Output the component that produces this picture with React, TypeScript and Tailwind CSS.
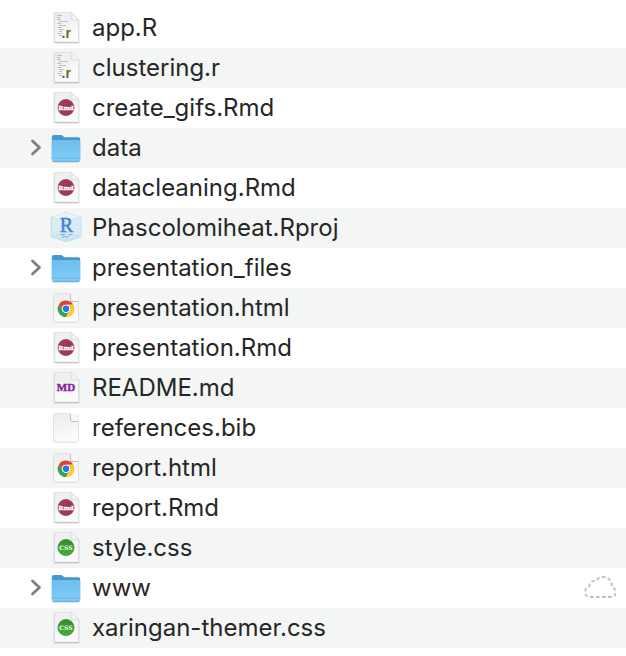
import React from "react";

type Kind = "r" | "rmd" | "folder" | "rproj" | "html" | "md" | "plain" | "css";

type Entry = { name: string; kind: Kind; inCloud?: boolean };

const entries: Entry[] = [
  { name: "app.R", kind: "r" },
  { name: "clustering.r", kind: "r" },
  { name: "create_gifs.Rmd", kind: "rmd" },
  { name: "data", kind: "folder" },
  { name: "datacleaning.Rmd", kind: "rmd" },
  { name: "Phascolomiheat.Rproj", kind: "rproj" },
  { name: "presentation_files", kind: "folder" },
  { name: "presentation.html", kind: "html" },
  { name: "presentation.Rmd", kind: "rmd" },
  { name: "README.md", kind: "md" },
  { name: "references.bib", kind: "plain" },
  { name: "report.html", kind: "html" },
  { name: "report.Rmd", kind: "rmd" },
  { name: "style.css", kind: "css" },
  { name: "www", kind: "folder", inCloud: true },
  { name: "xaringan-themer.css", kind: "css" },
];

function Gradients() {
  return (
    <svg className="absolute size-0" aria-hidden="true">
      <defs>
        <linearGradient id="paper" x1="0" y1="0" x2="0.3" y2="1">
          <stop offset="0" stopColor="#ececec" />
          <stop offset="0.5" stopColor="#f3f3f3" />
          <stop offset="1" stopColor="#fcfcfc" />
        </linearGradient>
        <linearGradient id="fold" x1="0" y1="1" x2="1" y2="0">
          <stop offset="0" stopColor="#e2e2e2" />
          <stop offset="0.5" stopColor="#ffffff" />
        </linearGradient>
        <linearGradient id="folderFront" x1="0" y1="0" x2="0" y2="1">
          <stop offset="0" stopColor="#6dbdef" />
          <stop offset="1" stopColor="#83cdf8" />
        </linearGradient>
        <linearGradient id="cubeFill" x1="0" y1="0" x2="0" y2="1">
          <stop offset="0" stopColor="#e6f2f7" />
          <stop offset="1" stopColor="#cde6f2" />
        </linearGradient>
        <linearGradient id="cubeLetter" x1="0" y1="0" x2="0" y2="1">
          <stop offset="0" stopColor="#3568ad" />
          <stop offset="1" stopColor="#4b9ce0" />
        </linearGradient>
        <linearGradient id="greenBadge" x1="0" y1="0" x2="0" y2="1">
          <stop offset="0" stopColor="#2f8f25" />
          <stop offset="1" stopColor="#43b52f" />
        </linearGradient>
      </defs>
    </svg>
  );
}

function Sheet() {
  return (
    <>
      <path d="M6.5 5.5H23.5L30.5 12.5V34.7H6.5Z" fill="none" stroke="#000" strokeOpacity="0.14" strokeWidth="1.8" strokeLinejoin="round" />
      <path d="M6.5 4.5H23.5L30.5 11.5V34.3H6.5Z" fill="url(#paper)" stroke="#dadada" strokeWidth="0.6" />
      <path d="M23.2 4.5L30.5 11.8H24.2Q23.2 11.8 23.2 10.8Z" fill="url(#fold)" stroke="#d2d2d2" strokeWidth="0.6" />
      <path d="M6.5 34.4H30.5" stroke="#bdbdbd" strokeWidth="0.8" />
    </>
  );
}

function RoundSheet() {
  return (
    <>
      <rect x="5.3" y="6" width="25.4" height="28.6" rx="2" fill="#000" fillOpacity="0.14" />
      <path d="M7.5 5.5H22.5L30.5 13.2V32Q30.5 34 28.5 34H7.5Q5.5 34 5.5 32V7.5Q5.5 5.5 7.5 5.5Z" fill="url(#paper)" stroke="#d6d6d6" strokeWidth="0.6" />
      <path d="M22.5 5.5H29Q30.5 5.5 30.5 7V13.2Z" fill="#f6f6f6" />
      <path d="M22.5 5.5L30.5 13.5H24Q22.5 13.5 22.5 12Z" fill="url(#fold)" />
      <path d="M22.5 6V12Q22.5 13.5 24 13.5H30" fill="none" stroke="#b6b6b6" strokeWidth="0.8" />
    </>
  );
}

const codeLines: [number, number, number][] = [
  [9, 7.5, 5], [9, 9.5, 3], [9, 11.5, 4], [11, 13.5, 9], [9, 15.5, 4],
  [11, 17.5, 7], [9, 19.5, 5], [11, 21.5, 5], [11, 23.5, 3], [9, 25.5, 5], [11, 27.5, 3],
];

function Drawing({ kind }: { kind: Kind }) {
  switch (kind) {
    case "folder":
      return (
        <>
          <path d="M4 32Q4 34.4 6 34.4H30Q32.2 34.4 32.2 32" fill="#000" fillOpacity="0.2" />
          <path d="M3.8 9Q3.8 7 5.8 7H12.5Q14 7 15 8L16.2 9.2H30.2Q32.2 9.2 32.2 11.2V31.5Q32.2 33.6 30 33.6H6Q3.8 33.6 3.8 31.4Z" fill="#4797cf" />
          <path d="M3.8 13.6Q3.8 12.4 5 12.4H31Q32.2 12.4 32.2 13.6V31.4Q32.2 33.6 30 33.6H6Q3.8 33.6 3.8 31.4Z" fill="url(#folderFront)" />
          <path d="M4.6 12.8H31.4" stroke="#8acdf3" strokeWidth="0.8" />
          <path d="M4 30.2H32" stroke="#62b1e3" strokeWidth="0.8" />
          <path d="M5.5 33.3H30.5" stroke="#5aa8d6" strokeWidth="0.8" />
        </>
      );
    case "rproj":
      return (
        <>
          <path d="M18 4.4L33 9.5V28.5L18 33.8L3.2 28.5V9.5Z" fill="url(#cubeFill)" stroke="#b4d8e8" strokeWidth="0.9" />
          <path d="M3.2 9.5L18 13.5L33 9.5L18 4.4Z" fill="#e9f4f8" />
          <path d="M18 13.5L33 9.5V28.5L18 24.5Z" fill="#d8e8f6" fillOpacity="0.8" />
          <path d="M3.2 9.5L18 13.5L33 9.5M3.2 28.5L18 24.5L33 28.5M18 4.4V33.8" fill="none" stroke="#bfdfeb" strokeWidth="0.8" />
          <text x="18.4" y="24.2" fontSize="20" textAnchor="middle" fill="url(#cubeLetter)" stroke="#4386cb" strokeWidth="0.5" className="font-['Liberation_Serif',serif]">R</text>
          <path d="M12.5 26.6H17M14.8 26.6V30M21 26.6H24.5M18.5 30L22 26.6M15.5 28.6H19.5" fill="none" stroke="#7ab8e0" strokeWidth="1" />
        </>
      );
    case "plain":
      return <RoundSheet />;
    case "html":
      return (
        <>
          <RoundSheet />
          <g transform="translate(18 20.8)">
            <circle r="8" fill="#fff" />
            <path d="M-7.2 -4.15A8.3 8.3 0 0 1 7.2 -4.15H0A4.15 4.15 0 0 0 -3.6 2.07Z" fill="#df4433" />
            <path d="M-7.2 -4.15A8.3 8.3 0 0 0 0 8.3L3.6 2.07A4.15 4.15 0 0 1 -3.6 2.07Z" fill="#31a352" />
            <path d="M0 8.3A8.3 8.3 0 0 0 7.2 -4.15H0A4.15 4.15 0 0 1 3.6 2.07Z" fill="#fbc929" />
            <circle r="4.1" fill="#fff" />
            <circle r="3.2" fill="#2874e4" />
          </g>
        </>
      );
    case "md":
      return (
        <>
          <Sheet />
          <text x="18" y="22.6" fontSize="11" fontWeight="700" textAnchor="middle" fill="#86259a" stroke="#86259a" strokeWidth="0.4" className="font-['Liberation_Serif',serif]">MD</text>
        </>
      );
    case "rmd":
      return (
        <>
          <Sheet />
          <circle cx="18" cy="19.5" r="8" fill="#a1355f" stroke="#855166" strokeWidth="0.9" />
          <text x="18" y="22" fontSize="7" fontWeight="700" textAnchor="middle" fill="#fff" stroke="#fff" strokeWidth="0.4" className="font-['Liberation_Serif',serif]">Rmd</text>
        </>
      );
    case "css":
      return (
        <>
          <Sheet />
          <circle cx="18" cy="19.5" r="8" fill="url(#greenBadge)" stroke="#4b8c42" strokeWidth="0.9" />
          <text x="18" y="21.8" fontSize="6" fontWeight="700" textAnchor="middle" fill="#fff" className="font-['DejaVu_Serif',serif]">CSS</text>
        </>
      );
    case "r":
      return (
        <>
          <Sheet />
          {codeLines.map(([x, y, w]) => (
            <path key={y} d={`M${x} ${y}h${w}`} stroke="#bcbcbc" strokeWidth="1" />
          ))}
          <text x="18.2" y="30.2" fontSize="14" fontWeight="700" textAnchor="middle" fill="#69692a" className="font-['Liberation_Sans',sans-serif]">.r</text>
        </>
      );
  }
}

function Row({ entry }: { entry: Entry }) {
  return (
    <li className="flex h-10 items-center pr-2 pl-7 even:bg-[#f4f5f5]">
      {entry.kind === "folder" ? (
        <button type="button" aria-label={`Expand ${entry.name}`} aria-expanded="false" className="h-10 w-4 shrink-0">
          <svg viewBox="0 0 16 40" className="h-10 w-4" fill="none" stroke="#7f7f7f" strokeWidth="2.8" strokeLinecap="round" strokeLinejoin="round">
            <path d="M4.5 13L11.5 19.5L4.5 26" />
          </svg>
        </button>
      ) : (
        <span className="w-4 shrink-0" />
      )}
      <svg viewBox="0 0 36 40" className="ml-1 h-10 w-9 shrink-0" aria-hidden="true">
        <Drawing kind={entry.kind} />
      </svg>
      <span className="ml-2 min-w-0 flex-1 truncate">{entry.name}</span>
      {entry.inCloud && (
        <svg viewBox="0 0 36 40" className="h-10 w-9 shrink-0" role="img" aria-label="Stored in the cloud">
          <path d="M8 29H29C32 29 33.7 27 33.7 24.3C33.7 21.8 32.3 20 30 19.3C30.4 13 26.5 8.9 21.4 8.9C17.8 8.9 15.4 10.6 14 13C10.2 12.1 7.2 15 7.3 18.5C4.5 19.5 3 21.5 3 24C3 27 5 29 8 29Z" fill="none" stroke="#bdbdbd" strokeWidth="1.8" strokeDasharray="3.6 2.4" />
        </svg>
      )}
    </li>
  );
}

export default function App() {
  return (
    <main className="min-h-screen bg-white py-2 font-['Inter','Liberation_Sans',sans-serif] text-2xl text-[#262626]">
      <Gradients />
      <ul>
        {entries.map((entry) => (
          <Row key={entry.name} entry={entry} />
        ))}
      </ul>
    </main>
  );
}
